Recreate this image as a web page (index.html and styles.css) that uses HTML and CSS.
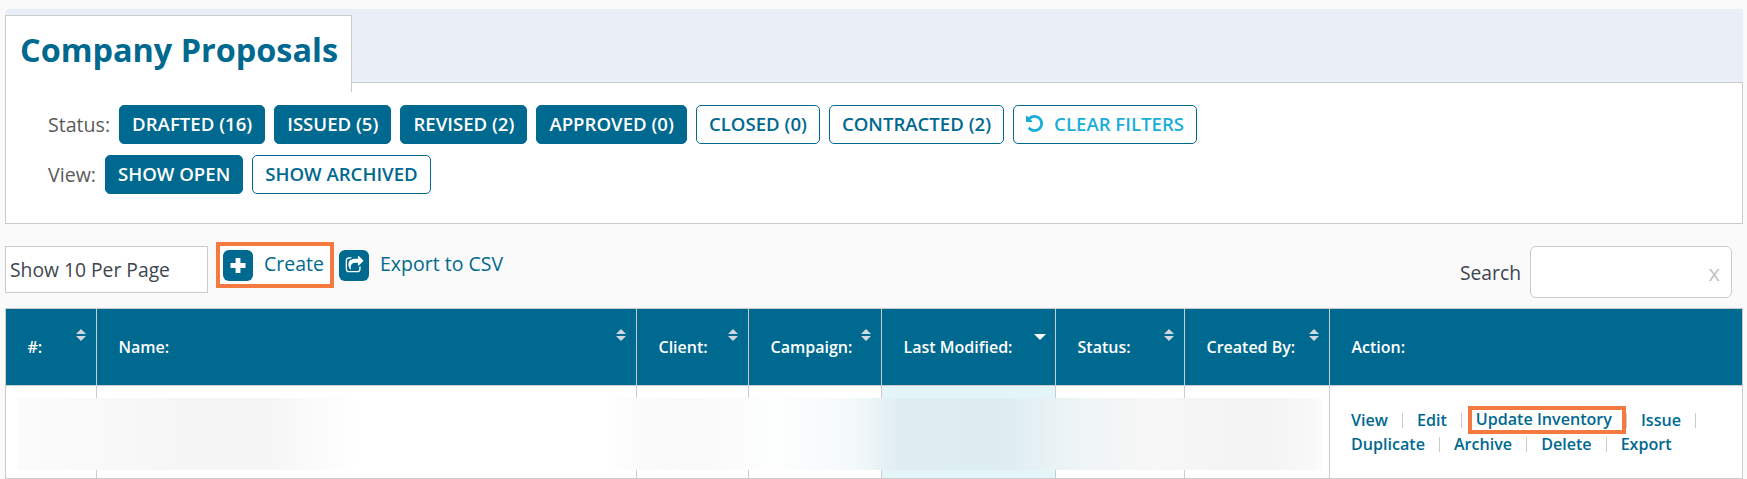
FILE: index.html
```html
<!DOCTYPE html>
<html lang="en">
<head>
<meta charset="utf-8">
<title>Company Proposals</title>
<link rel="stylesheet" href="styles.css">
</head>
<body>
<div class="page">
  <div class="strip">
    <h1 class="tab">Company Proposals</h1>
  </div>
  <section class="panel">
    <div class="filter-row">
      <span class="filter-label">Status:</span>
      <a class="btn solid">DRAFTED (16)</a>
      <a class="btn solid">ISSUED (5)</a>
      <a class="btn solid">REVISED (2)</a>
      <a class="btn solid">APPROVED (0)</a>
      <a class="btn">CLOSED (0)</a>
      <a class="btn">CONTRACTED (2)</a>
      <a class="btn clear">
        <svg class="undo" viewBox="128 128 1536 1536"><path d="M1664 896q0 156-61 298t-164 245-245 164-298 61q-172 0-327-72.5t-264-204.5q-7-10-6.5-22.5t8.5-20.5l137-138q10-9 25-9 16 2 23 12 73 95 179 147t225 52q104 0 198.5-40.5t163.5-109.5 109.5-163.5 40.5-198.5-40.5-198.5-109.5-163.5-163.5-109.5-198.5-40.5q-98 0-188 35.5t-160 101.5l137 138q31 30 14 69-17 40-59 40h-448q-26 0-45-19t-19-45v-448q0-42 40-59 39-17 69 14l130 129q107-101 244.5-156.5t284.5-55.5q156 0 298 61t245 164 164 245 61 298z"/></svg>
        CLEAR FILTERS
      </a>
    </div>
    <div class="filter-row">
      <span class="filter-label">View:</span>
      <a class="btn solid">SHOW OPEN</a>
      <a class="btn">SHOW ARCHIVED</a>
    </div>
  </section>

  <div class="toolbar">
    <div class="per-page">Show 10 Per Page</div>
    <a class="tool create">
      <span class="tool-icon"><svg class="plus" viewBox="0 0 30 31"><path d="M12.6 8h4.8v5.1h5.1v4.8h-5.1V23h-4.8v-5.1H7.5v-4.8h5.1z"/></svg></span>
      Create
    </a>
    <a class="tool export">
      <span class="tool-icon"><svg class="share" viewBox="0 0 1792 1792"><path d="M1472 989v259q0 119-84.5 203.5t-203.5 84.5h-832q-119 0-203.5-84.5t-84.5-203.5v-832q0-119 84.5-203.5t203.5-84.5h255q13 0 22.5 9.5t9.5 22.5q0 27-26 32-77 26-133 60-10 4-16 4h-112q-66 0-113 47t-47 113v832q0 66 47 113t113 47h832q66 0 113-47t47-113v-214q0-19 18-29 28-13 54-37 16-16 35-8 21 9 21 29zm237-496l-384 384q-18 19-45 19-12 0-25-5-39-17-39-59v-192h-160q-323 0-438 131-119 137-74 473 3 23-20 34-8 2-12 2-16 0-26-13-10-14-21-31t-39.5-68.5-49.5-99.5-38.5-114-17.5-122q0-49 3.5-91t14-90 28-88 47-81.5 68.5-74 94.5-61.5 124.5-48.5 159.5-30.5 196.5-11h160v-192q0-42 39-59 13-5 25-5 26 0 45 19l384 384q19 19 19 45t-19 45z"/></svg></span>
      Export to CSV
    </a>
    <div class="search">
      <span class="search-label">Search</span>
      <div class="search-box">x</div>
    </div>
  </div>

  <div class="table-wrap">
    <table class="grid">
      <colgroup>
        <col class="c-num"><col class="c-name"><col class="c-client"><col class="c-camp"><col class="c-mod"><col class="c-status"><col class="c-by"><col class="c-act">
      </colgroup>
      <thead>
        <tr>
          <th class="sort">#:</th>
          <th class="sort">Name:</th>
          <th class="sort">Client:</th>
          <th class="sort">Campaign:</th>
          <th class="sort-desc">Last Modified:</th>
          <th class="sort">Status:</th>
          <th class="sort">Created By:</th>
          <th>Action:</th>
        </tr>
      </thead>
      <tbody>
        <tr>
          <td></td><td></td><td></td><td></td>
          <td class="active"></td>
          <td></td><td></td>
          <td class="actions">
            <div class="act-line">
              <a>View</a><i></i><a>Edit</a><i class="near"></i><a class="hl">Update Inventory</a><i class="after-hl"></i><a>Issue</a><i></i>
            </div>
            <div class="act-line">
              <a>Duplicate</a><i></i><a>Archive</a><i></i><a>Delete</a><i></i><a>Export</a>
            </div>
          </td>
        </tr>
      </tbody>
    </table>
    <div class="redacted"></div>
  </div>
</div>
</body>
</html>
```
FILE: styles.css
```css
* { box-sizing: border-box; }
html, body { margin: 0; padding: 0; height: 100%; overflow: hidden; }
body {
  background: #fafafa;
  font-family: "Open Sans", "Noto Sans", sans-serif;
  color: #555;
}
a { color: #00698f; text-decoration: none; }
.page { padding: 9px 4px 0 5px; }

.strip {
  height: 73px;
  background: #eaeff7;
  border-top-left-radius: 5px;
  padding-top: 6px;
}
.tab {
  position: relative;
  z-index: 1;
  margin: 0;
  width: 347px;
  height: 77px;
  padding: 11px 0 0 14px;
  background: #fff;
  border: 1px solid #ccc;
  border-bottom: 0;
  color: #00698f;
  font-size: 32.4px;
  font-weight: 700;
  line-height: 44px;
  white-space: nowrap;
}

.panel {
  height: 142px;
  background: #fff;
  border: 1px solid #ccc;
  padding: 22px 0 0 42px;
}
.filter-row {
  display: flex;
  align-items: center;
  gap: 9px;
  margin-bottom: 11px;
}
.filter-label { font-size: 19.6px; font-weight: 500; color: #5a5a5a; }
.btn {
  display: flex;
  align-items: center;
  height: 39px;
  padding: 0 12px 2px;
  border: 1px solid #00698f;
  border-radius: 5px;
  background: #fff;
  color: #00698f;
  font-size: 18.6px;
  font-weight: 600;
  white-space: nowrap;
}
.btn.solid { background: #00698f; color: #fff; }
.btn.clear { color: #19aed8; gap: 11px; }
.undo { width: 17px; height: 17px; fill: #19aed8; }

.toolbar {
  display: flex;
  align-items: flex-start;
  height: 84px;
  padding: 22px 11px 0 0;
  font-size: 19.3px;
}
.per-page {
  width: 203px;
  height: 47px;
  padding-left: 4px;
  background: #fff;
  border: 1px solid #ccc;
  color: #3c4650;
  font-weight: 500;
  line-height: 45px;
}
.tool {
  display: flex;
  align-items: flex-start;
  gap: 11px;
  font-size: 19.5px;
  font-weight: 500;
  line-height: 28px;
  white-space: nowrap;
}
.create {
  width: 118px;
  height: 46px;
  margin: -4px 0 0 8px;
  padding: 4px 0 0 3px;
  background: #fff;
  border: 4px solid #f47a3f;
}
.export { height: 46px; margin: -4px 0 0 5px; padding-top: 8px; }
.tool-icon {
  display: flex;
  align-items: center;
  justify-content: center;
  flex: none;
  width: 30px;
  height: 31px;
  border-radius: 6px;
  background: #00698f;
}
.tool-icon svg { display: block; fill: #fff; }
.plus { width: 30px; height: 31px; }
.share { width: 19px; height: 19px; }

.search { display: flex; align-items: center; gap: 9px; margin-left: auto; }
.search-label { color: #3c4650; font-weight: 500; }
.search-box {
  display: flex;
  align-items: center;
  justify-content: flex-end;
  width: 202px;
  height: 52px;
  padding-right: 11px;
  background: #fff;
  border: 1px solid #ccc;
  border-radius: 6px;
  color: #c4c4c4;
  font-size: 22px;
}

.table-wrap { position: relative; }
.grid {
  width: 100%;
  height: 171px;
  table-layout: fixed;
  border-collapse: collapse;
  border: 1px solid #ccc;
  background: #fff;
}
.c-num { width: 91px; }
.c-name { width: 540px; }
.c-client { width: 112px; }
.c-camp { width: 133px; }
.c-mod { width: 174px; }
.c-status { width: 129px; }
.c-by { width: 145px; }
.grid th, .grid td { border: 1px solid #ccc; padding: 0; }
.grid tr > :first-child { border-left: 0; }
.grid thead tr { height: 77px; }
.grid th {
  position: relative;
  padding: 0 0 0 21.5px;
  background: #00698f;
  color: #fff;
  font-size: 16px;
  font-weight: 600;
  text-align: left;
  white-space: nowrap;
}
.sort::before, .sort::after, .sort-desc::after {
  content: "";
  position: absolute;
  right: 10px;
  width: 0;
  height: 0;
  border-left: 5px solid transparent;
  border-right: 5px solid transparent;
}
.sort::before { top: 20px; border-bottom: 5px solid #cfd8dc; }
.sort::after { top: 27px; border-top: 5px solid #cfd8dc; }
.sort-desc::after {
  top: 25px;
  right: 9px;
  border-left-width: 6px;
  border-right-width: 6px;
  border-top: 6px solid #fff;
}
.grid td.active { background: #e4f5fa; }
.actions { padding-left: 21px !important; }
.act-line {
  display: flex;
  align-items: center;
  height: 24px;
  font-size: 16.1px;
  font-weight: 600;
  white-space: nowrap;
}
.act-line i {
  display: block;
  width: 1px;
  height: 15px;
  margin: 0 14px;
  background: #ccc;
}
.act-line i.near { margin-right: 6px; }
.act-line i.after-hl { margin: 0 14px 0 0; }
.hl {
  height: 28px;
  padding: 0 10px 0 4px;
  border: 4px solid #f47a3f;
  line-height: 19px;
}
.redacted {
  position: absolute;
  left: 13px;
  top: 90px;
  width: 1305px;
  height: 72px;
  background: linear-gradient(90deg,
    #fbfbfb 0, #f9f9f9 6%, #f5f5f5 14%, #f5f5f5 19%, #fbfbfb 23%, #ffffff 26%,
    #ffffff 45%, #fafafa 48%, #f9f9f9 52%, #fdfefe 58%, #f4f9fb 64%,
    #dfedf1 67.5%, #dcecf1 75%, #eef4f6 81%, #f7f7f7 87%,
    #f3f3f3 95%, #f8f8f8 99%, #fcfcfc 100%);
}
```
